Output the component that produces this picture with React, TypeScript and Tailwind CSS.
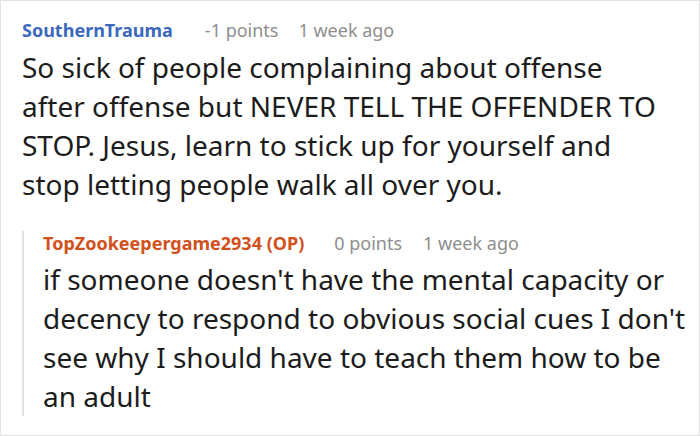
export default function App() {
  return (
    <div
      className="w-[700px] h-[436px] bg-white border border-[#e2e2e2] overflow-hidden"
      style={{ fontFamily: '"Noto Sans", "Open Sans", sans-serif' }}
    >
      <div className="pl-[21px] pr-[9px] pt-[17px]">
        <div className="flex items-baseline text-[18px] leading-[24px]">
          <span className="font-bold text-[#3a69bd]">SouthernTrauma</span>
          <span className="ml-[32px] text-[#8e8e8e]">-1 points</span>
          <span className="ml-[20px] text-[#8e8e8e]">1 week ago</span>
        </div>
        <p className="mt-[6px] mr-[23px] text-[28px] leading-[39px] text-[#1c1c1c]">
          So sick of people complaining about offense after offense but NEVER TELL THE OFFENDER TO STOP. Jesus, learn to stick up for yourself and stop letting people walk all over you.
        </p>
        <div className="mt-[37px] border-l-2 border-[#e2e2e2] pl-[19px]">
          <div className="-mt-[10px] flex items-baseline text-[18px] leading-[24px]">
            <span className="font-bold text-[#d2501c]">TopZookeepergame2934 (OP)</span>
            <span className="ml-[30px] text-[#8e8e8e]">0 points</span>
            <span className="ml-[21px] text-[#8e8e8e]">1 week ago</span>
          </div>
          <p className="mt-[5px] text-[28px] leading-[39px] text-[#1c1c1c]">
            if someone doesn't have the mental capacity or decency to respond to obvious social cues I don't see why I should have to teach them how to be an adult
          </p>
        </div>
      </div>
    </div>
  );
}
